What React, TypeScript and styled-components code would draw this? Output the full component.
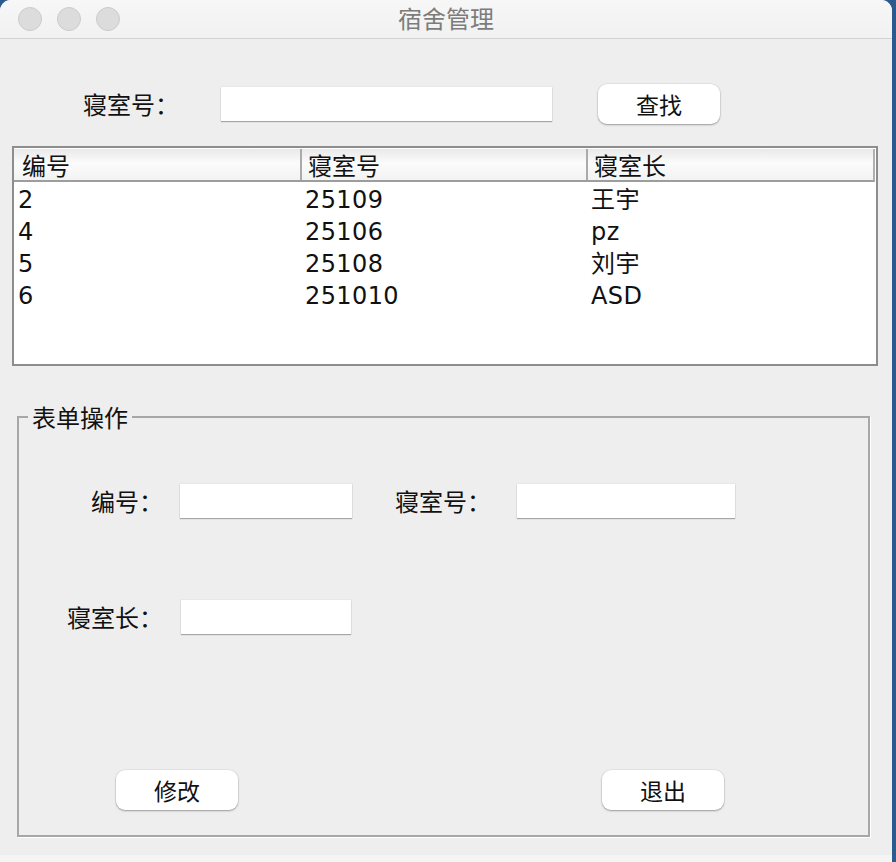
import styled, { createGlobalStyle } from "styled-components";

const GlobalStyle = createGlobalStyle`
  html, body {
    margin: 0;
    padding: 0;
    background: #2b5a8c;
    overflow: hidden;
  }
  body {
    font-family: "DejaVu Sans", "Noto Sans CJK SC", sans-serif;
    color: #111;
  }
`;

const Window = styled.div`
  width: 892px;
  height: 862px;
  display: flex;
  flex-direction: column;
  background: #eeeeee;
  border-radius: 11px 11px 0 0;
  overflow: hidden;
`;

const TitleBar = styled.div`
  height: 38px;
  flex-shrink: 0;
  display: grid;
  grid-template-columns: 1fr auto 1fr;
  align-items: center;
  background: linear-gradient(#f7f7f7, #f1f1f1);
  border-bottom: 1px solid #d2d2d2;
`;

const Lights = styled.div`
  display: flex;
  gap: 15px;
  padding-left: 18px;
`;

const Light = styled.span`
  width: 24px;
  height: 24px;
  border-radius: 50%;
  background: #dcdcdc;
  border: 1px solid #cbcbcb;
  box-sizing: border-box;
`;

const Title = styled.div`
  font-family: "Noto Sans CJK SC", sans-serif;
  font-size: 24px;
  color: #7c7c7c;
  line-height: 1;
  margin-top: -3px;
`;

const Body = styled.div`
  flex: 1;
  display: flex;
  flex-direction: column;
  padding: 45px 14px 0 12px;
`;

const SearchRow = styled.div`
  display: flex;
  align-items: center;
  height: 40px;
  padding-left: 71px;
`;

const Label = styled.span<{ $width: number; $right?: boolean }>`
  width: ${(p) => p.$width}px;
  flex-shrink: 0;
  font-family: "Noto Sans CJK SC", sans-serif;
  font-size: 24px;
  line-height: 1;
  text-align: ${(p) => (p.$right ? "right" : "left")};
`;

const TextField = styled.input<{ $width: number }>`
  width: ${(p) => p.$width}px;
  height: 34px;
  box-sizing: border-box;
  border: none;
  outline: none;
  background: #fff;
  box-shadow: 0 1px 1px rgba(0, 0, 0, 0.28), 0 0 0 0.5px rgba(0, 0, 0, 0.06);
  font-size: 20px;
  padding: 0 6px;
`;

const Button = styled.button<{ $gap?: number }>`
  width: 122px;
  height: 40px;
  margin-left: ${(p) => p.$gap ?? 0}px;
  border: none;
  border-radius: 9px;
  background: #fff;
  box-shadow: 0 1px 2px rgba(0, 0, 0, 0.32), 0 0 0 0.5px rgba(0, 0, 0, 0.08);
  font-family: "Noto Sans CJK SC", sans-serif;
  font-size: 23px;
  color: #111;
  padding: 0;
  cursor: pointer;
`;

const Table = styled.div`
  margin-top: 22px;
  height: 220px;
  box-sizing: border-box;
  border: 2px solid #8d8d8d;
  background: #fff;
  padding-top: 1px;
`;

const HeaderRow = styled.div`
  display: grid;
  grid-template-columns: 286px 286px 287px;
  height: 33px;
  box-sizing: border-box;
  background: linear-gradient(#e9e9e9, #fbfbfb 45%, #f3f3f3);
  border-bottom: 2px solid #9d9d9d;
  border-right: 2px solid #b0b0b0;
  width: 861px;
`;

const HeaderCell = styled.div<{ $first?: boolean }>`
  display: flex;
  align-items: center;
  padding-left: ${(p) => (p.$first ? 8 : 6)}px;
  border-left: ${(p) => (p.$first ? "none" : "2px solid #aaaaaa")};
  font-family: "Noto Sans CJK SC", sans-serif;
  font-size: 24px;
  line-height: 1;
`;

const Row = styled.div`
  display: grid;
  grid-template-columns: 286px 286px 287px;
  height: 32px;
  align-items: center;
`;

const Cell = styled.div<{ $first?: boolean }>`
  padding-left: ${(p) => (p.$first ? 4 : 5)}px;
  padding-top: 3px;
  font-size: 24px;
  line-height: 1;
  letter-spacing: 0.4px;
`;

const FormBox = styled.fieldset`
  margin: 38px 8px 0 5px;
  padding: 54px 0 25px 0;
  border: 2px solid #a7a7a7;
  box-shadow: 1px 1px 0 #fff;
  min-width: 0;
`;

const Legend = styled.legend`
  margin-left: 9px;
  padding: 0 4px;
  font-family: "Noto Sans CJK SC", sans-serif;
  font-size: 24px;
  line-height: 26px;
`;

const FormRow = styled.div<{ $top?: number }>`
  display: flex;
  align-items: center;
  margin-top: ${(p) => p.$top ?? 0}px;
`;

const ButtonRow = styled.div`
  display: flex;
  margin-top: 136px;
  padding-left: 97px;
`;

const Spacer = styled.div<{ $w: number }>`
  width: ${(p) => p.$w}px;
  flex-shrink: 0;
`;

const BottomEdge = styled.div`
  margin-top: auto;
  height: 7px;
  margin-left: -12px;
  margin-right: -14px;
  background: #f4f4f4;
`;

const rooms = [
  { id: "2", room: "25109", head: "王宇" },
  { id: "4", room: "25106", head: "pz" },
  { id: "5", room: "25108", head: "刘宇" },
  { id: "6", room: "251010", head: "ASD" },
];

export default function App() {
  return (
    <>
      <GlobalStyle />
      <Window>
        <TitleBar>
          <Lights>
            <Light />
            <Light />
            <Light />
          </Lights>
          <Title>宿舍管理</Title>
          <div />
        </TitleBar>
        <Body>
          <SearchRow>
            <Label $width={138}>寝室号：</Label>
            <TextField $width={331} />
            <Button $gap={46}>查找</Button>
          </SearchRow>

          <Table>
            <HeaderRow>
              <HeaderCell $first>编号</HeaderCell>
              <HeaderCell>寝室号</HeaderCell>
              <HeaderCell>寝室长</HeaderCell>
            </HeaderRow>
            {rooms.map((r) => (
              <Row key={r.id}>
                <Cell $first>{r.id}</Cell>
                <Cell>{r.room}</Cell>
                <Cell>{r.head}</Cell>
              </Row>
            ))}
          </Table>

          <FormBox>
            <Legend>表单操作</Legend>
            <FormRow>
              <Label $width={144} $right>编号：</Label>
              <Spacer $w={17} />
              <TextField $width={172} />
              <Spacer $w={43} />
              <Label $width={122}>寝室号：</Label>
              <TextField $width={218} />
            </FormRow>
            <FormRow $top={82}>
              <Label $width={144} $right>寝室长：</Label>
              <Spacer $w={18} />
              <TextField $width={170} />
            </FormRow>
            <ButtonRow>
              <Button>修改</Button>
              <Button $gap={364}>退出</Button>
            </ButtonRow>
          </FormBox>
          <BottomEdge />
        </Body>
      </Window>
    </>
  );
}
